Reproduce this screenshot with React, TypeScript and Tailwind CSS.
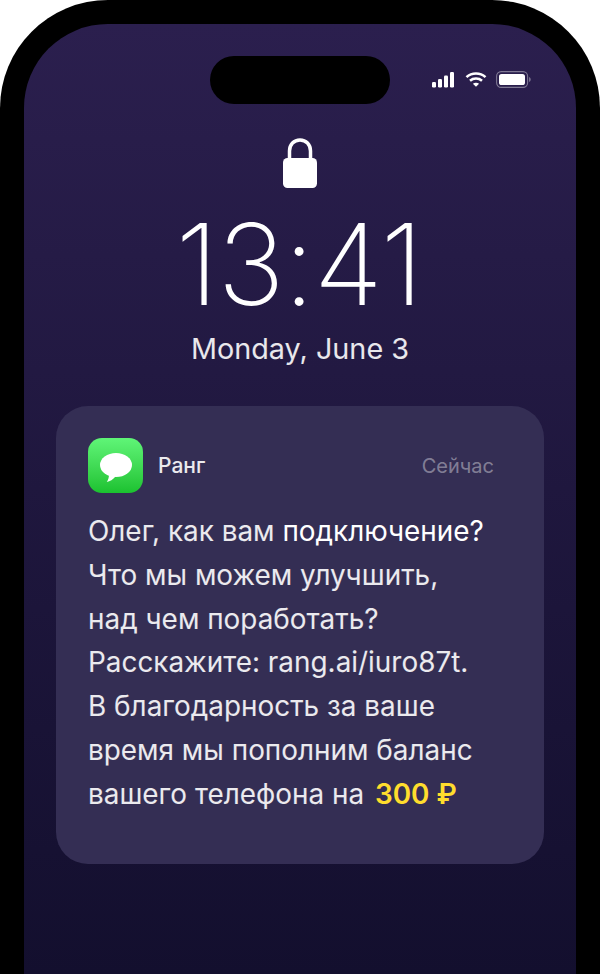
import React from "react";

const StatusIcons = () => (
  <div className="absolute right-[69px] top-[71px] flex items-center">
    <svg width="23" height="17" viewBox="0 0 23 17" fill="#fff">
      <rect x="0" y="11" width="4" height="5.500" rx="1.200" />
      <rect x="6" y="8" width="4" height="8.500" rx="1.200" />
      <rect x="12" y="4.500" width="4" height="12" rx="1.200" />
      <rect x="18" y="1" width="4" height="15.500" rx="1.200" />
    </svg>
    <svg className="ml-[10px]" width="22" height="17" viewBox="0 0 22 17" fill="none" stroke="#fff" strokeWidth="2.600">
      <path d="M1.500 6.100C6.800 1.300 15.200 1.300 20.500 6.100" />
      <path d="M5 9.700C8.400 6.800 13.600 6.800 17 9.700" />
      <path d="M11 15.700 7.900 12.700C9.700 11.300 12.300 11.300 14.100 12.700Z" fill="#fff" stroke="none" />
    </svg>
    <svg className="ml-[9px]" width="35" height="17" viewBox="0 0 35 17" fill="none">
      <rect x="0.600" y="0.600" width="31" height="15.800" rx="4.600" stroke="#fff" strokeOpacity="0.4" strokeWidth="1.100" />
      <rect x="3" y="3" width="26" height="11" rx="2.600" fill="#fff" />
      <path d="M33.200 6v5c.9-.4 1.400-1.400 1.400-2.500S34.100 6.400 33.200 6Z" fill="#fff" fillOpacity="0.45" />
    </svg>
  </div>
);

const LockIcon = () => (
  <svg width="34" height="50" viewBox="0 0 34 50" fill="none">
    <path d="M6.500 21V13C6.500 6.500 11 2 17 2S27.500 6.500 27.500 13V21" stroke="#fff" strokeWidth="3.500" />
    <rect x="0" y="20" width="34" height="30" rx="4.500" fill="#fff" />
  </svg>
);

const MessagesIcon = () => (
  <div className="flex h-[55px] w-[55px] items-center justify-center rounded-[14px] bg-gradient-to-b from-[#5ff577] to-[#1ac22f]">
    <svg className="mt-[3px]" width="32" height="29" viewBox="0 0 32 29" fill="#fff">
      <ellipse cx="16" cy="12" rx="16" ry="12" />
      <path d="M9 20C9.300 24 8.200 27 6.800 29C10 28.500 13 26.500 15.500 23.500Z" />
    </svg>
  </div>
);

export default function App() {
  const lines = [
    <>Олег, как вам <span className="text-white">подключение?</span></>,
    <>Что мы можем улучшить,</>,
    <>над чем поработать?</>,
    <>Расскажите: rang.ai/iuro87t.</>,
    <>В благодарность за ваше</>,
    <>время мы пополним баланс</>,
    <>вашего телефона на <span className="ml-[3px] font-semibold text-[#ffdd2d]">300 ₽</span></>,
  ];

  return (
    <div className="h-[974px] w-[600px] overflow-hidden bg-white font-['Inter',sans-serif]">
      <div className="relative h-full rounded-t-[108px] bg-black px-6 pt-6">
        <div className="flex h-full flex-col items-center rounded-t-[84px] bg-gradient-to-b from-[#2b1f4e] to-[#130f2e] px-8 pt-8">
          <div className="h-12 w-[180px] shrink-0 rounded-3xl bg-black" />
          <div className="mt-[34px] shrink-0 leading-none">
            <LockIcon />
          </div>
          <div className="mr-[2px] mt-[16px] text-[113px] font-extralight leading-[120px] tracking-[-1px] text-white">13:41</div>
          <div className="mt-[5px] text-[28.800px] font-normal leading-[40px] text-white/90">Monday, June 3</div>
          <div className="mt-[37px] flex h-[458px] w-full flex-col rounded-[32px] bg-[#342e54] px-8 pt-8">
            <div className="flex items-center">
              <MessagesIcon />
              <span className="ml-[15px] text-[21px] font-medium text-white/90">Ранг</span>
              <span className="ml-auto mr-[18px] text-[20px] text-white/40">Сейчас</span>
            </div>
            <div className="mt-[17px] flex flex-col text-[27.900px] leading-[43.800px] text-white/90">
              {lines.map((line, i) => (
                <div key={i} className="whitespace-nowrap">{line}</div>
              ))}
            </div>
          </div>
        </div>
        <StatusIcons />
      </div>
    </div>
  );
}
